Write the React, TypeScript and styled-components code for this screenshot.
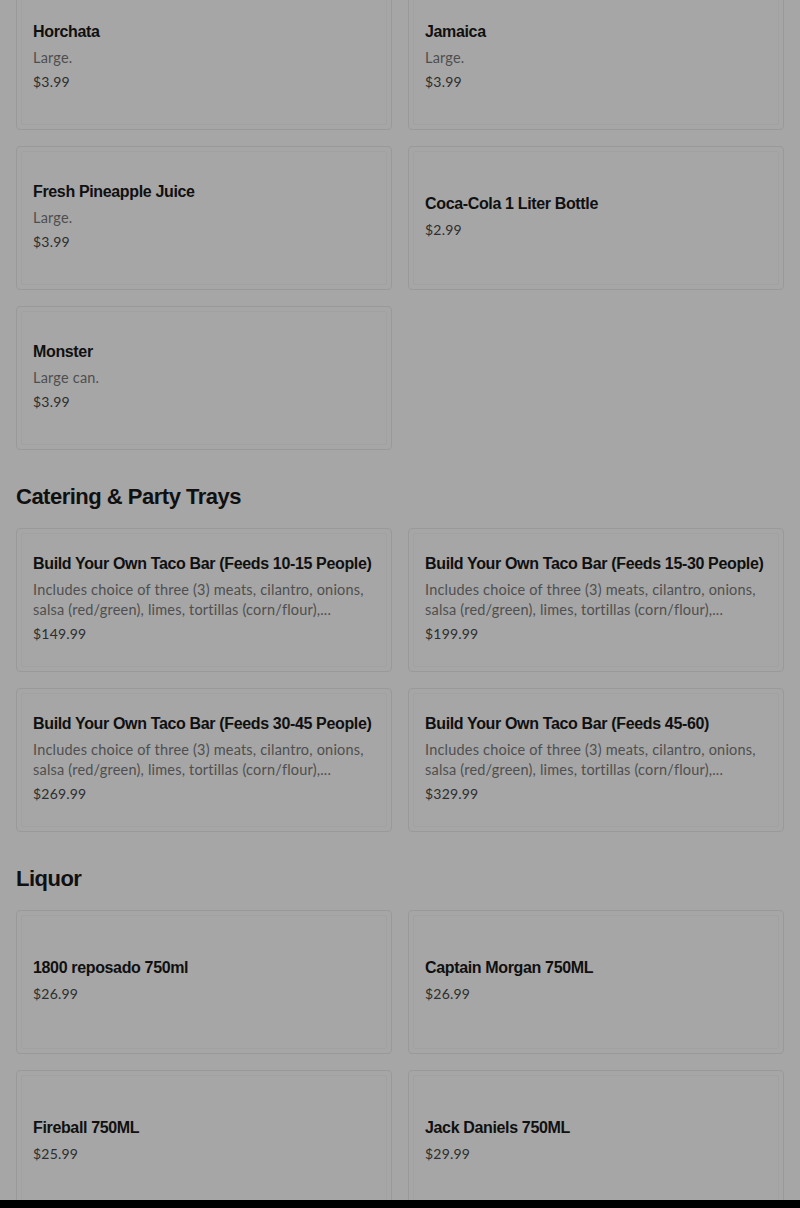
import React from 'react';
import styled, { createGlobalStyle } from 'styled-components';

const GlobalStyle = createGlobalStyle`
  html, body {
    margin: 0;
    padding: 0;
    background: #ffffff;
  }
  body {
    font-family: 'Liberation Sans', Arial, sans-serif;
    overflow: hidden;
  }
`;

const Page = styled.div`
  margin-top: -14px;
  padding: 0 16px;
`;

const Section = styled.section``;

const SectionTitle = styled.h2`
  margin: 33px 0 17px;
  font-family: 'Liberation Sans', Arial, sans-serif;
  font-size: 22px;
  line-height: 28px;
  font-weight: 700;
  letter-spacing: -0.5px;
  color: #191919;
`;

const Grid = styled.div`
  display: grid;
  grid-template-columns: 1fr 1fr;
  gap: 16px;
`;

const Card = styled.div`
  position: relative;
  box-sizing: border-box;
  height: 144px;
  padding: 0 16px 2px;
  display: flex;
  flex-direction: column;
  justify-content: center;
  border: 1px solid #ececec;
  border-radius: 4px;
  background: #ffffff;

  &::after {
    content: '';
    position: absolute;
    inset: 4px;
    border: 1px solid #f7f7f7;
    border-radius: 2px;
    pointer-events: none;
  }
`;

const ItemName = styled.div`
  font-family: 'Liberation Sans', Arial, sans-serif;
  font-size: 16px;
  line-height: 20px;
  font-weight: 700;
  letter-spacing: -0.35px;
  color: #191919;
`;

const ItemDesc = styled.div`
  margin-top: 6px;
  font-family: Lato, 'Noto Sans', sans-serif;
  font-size: 14.5px;
  line-height: 20px;
  letter-spacing: 0.2px;
  color: #7a7a7a;
  display: -webkit-box;
  -webkit-line-clamp: 2;
  -webkit-box-orient: vertical;
  overflow: hidden;
`;

const ItemPrice = styled.div<{ $tight?: boolean }>`
  margin-top: ${(p) => (p.$tight ? 6 : 4)}px;
  font-family: Lato, 'Noto Sans', sans-serif;
  font-size: 14px;
  line-height: 20px;
  letter-spacing: 0.2px;
  color: #474747;
`;

const Overlay = styled.div`
  position: fixed;
  inset: 0;
  background: rgba(0, 0, 0, 0.35);
  pointer-events: none;
`;

const BottomBar = styled.div`
  position: fixed;
  left: 0;
  right: 0;
  bottom: 0;
  height: 8px;
  background: #000000;
`;

type Item = { name: string; desc?: string; price: string };

const tacoDesc =
  'Includes choice of three (3) meats, cilantro, onions, salsa (red/green), limes, tortillas (corn/flour),...';

const drinks: Item[] = [
  { name: 'Horchata', desc: 'Large.', price: '$3.99' },
  { name: 'Jamaica', desc: 'Large.', price: '$3.99' },
  { name: 'Fresh Pineapple Juice', desc: 'Large.', price: '$3.99' },
  { name: 'Coca-Cola 1 Liter Bottle', price: '$2.99' },
  { name: 'Monster', desc: 'Large can.', price: '$3.99' },
];

const catering: Item[] = [
  { name: 'Build Your Own Taco Bar (Feeds 10-15 People)', desc: tacoDesc, price: '$149.99' },
  { name: 'Build Your Own Taco Bar (Feeds 15-30 People)', desc: tacoDesc, price: '$199.99' },
  { name: 'Build Your Own Taco Bar (Feeds 30-45 People)', desc: tacoDesc, price: '$269.99' },
  { name: 'Build Your Own Taco Bar (Feeds 45-60)', desc: tacoDesc, price: '$329.99' },
];

const liquor: Item[] = [
  { name: '1800 reposado 750ml', price: '$26.99' },
  { name: 'Captain Morgan 750ML', price: '$26.99' },
  { name: 'Fireball 750ML', price: '$25.99' },
  { name: 'Jack Daniels 750ML', price: '$29.99' },
];

const MenuCard: React.FC<{ item: Item }> = ({ item }) => (
  <Card>
    <ItemName>{item.name}</ItemName>
    {item.desc && <ItemDesc>{item.desc}</ItemDesc>}
    <ItemPrice $tight={!item.desc}>{item.price}</ItemPrice>
  </Card>
);

const App: React.FC = () => (
  <>
    <GlobalStyle />
    <Page>
      <Section>
        <Grid>
          {drinks.map((d) => (
            <MenuCard key={d.name} item={d} />
          ))}
        </Grid>
      </Section>
      <Section>
        <SectionTitle>Catering &amp; Party Trays</SectionTitle>
        <Grid>
          {catering.map((d) => (
            <MenuCard key={d.name} item={d} />
          ))}
        </Grid>
      </Section>
      <Section>
        <SectionTitle>Liquor</SectionTitle>
        <Grid>
          {liquor.map((d) => (
            <MenuCard key={d.name} item={d} />
          ))}
        </Grid>
      </Section>
    </Page>
    <Overlay />
    <BottomBar />
  </>
);

export default App;
